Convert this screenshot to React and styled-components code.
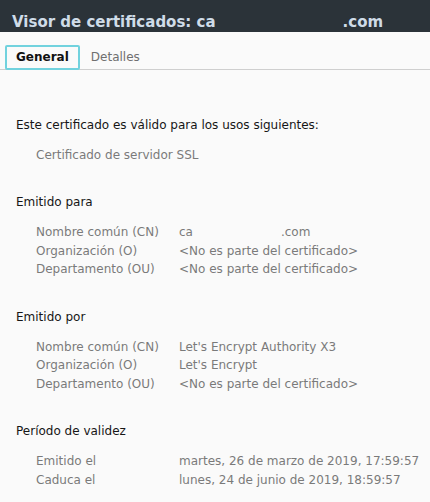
import styled, { createGlobalStyle } from 'styled-components'

const GlobalStyle = createGlobalStyle`
  html, body {
    margin: 0;
    padding: 0;
    background: #fafafa;
  }
  body {
    font-family: "DejaVu Sans", "Liberation Sans", sans-serif;
  }
`

const Blank = styled.span`
  display: inline-block;
  width: ${p => p.$w}px;
`

const sections = [
  {
    title: 'Emitido para',
    rows: [
      ['Nombre común (CN)', 'ca', '.com'],
      ['Organización (O)', '<No es parte del certificado>'],
      ['Departamento (OU)', '<No es parte del certificado>'],
    ],
  },
  {
    title: 'Emitido por',
    rows: [
      ['Nombre común (CN)', "Let's Encrypt Authority X3"],
      ['Organización (O)', "Let's Encrypt"],
      ['Departamento (OU)', '<No es parte del certificado>'],
    ],
  },
  {
    title: 'Período de validez',
    rows: [
      ['Emitido el', 'martes, 26 de marzo de 2019, 17:59:57'],
      ['Caduca el', 'lunes, 24 de junio de 2019, 18:59:57'],
    ],
  },
]

const App = () => {
  return <Window>
    <GlobalStyle />
    <TitleBar>
      Visor de certificados: ca<Blank $w={127} />.com
    </TitleBar>
    <Tabs>
      <Tab $active>General</Tab>
      <Tab>Detalles</Tab>
    </Tabs>
    <Content>
      <Heading>Este certificado es válido para los usos siguientes:</Heading>
      <Usage>Certificado de servidor SSL</Usage>
      {sections.map(s => (
        <Section key={s.title}>
          <Heading>{s.title}</Heading>
          <Fields>
            {s.rows.map(([label, value, tail]) => (
              <Row key={label}>
                <span>{label}</span>
                <span>{value}{tail && <><Blank $w={88} />{tail}</>}</span>
              </Row>
            ))}
          </Fields>
        </Section>
      ))}
    </Content>
  </Window>
}

const Window = styled.div`
  width: 430px;
  height: 502px;
  overflow: hidden;
  background: #fafafa;
`

const TitleBar = styled.div`
  height: 32px;
  box-sizing: border-box;
  padding: 0 0 2px 12px;
  background: #2b3339;
  color: #cfdce8;
  font-weight: bold;
  font-size: 15px;
  line-height: 1;
  display: flex;
  align-items: flex-end;
  overflow: hidden;
  white-space: pre;
  & > * {
    flex: none;
  }
`

const Tabs = styled.div`
  display: flex;
  align-items: flex-end;
  padding: 14px 0 0 5px;
  border-bottom: 1px solid #cfcfcf;
  height: 23px;
`

const Tab = styled.div`
  box-sizing: border-box;
  height: 25px;
  padding: 0 9px 1px;
  display: flex;
  align-items: center;
  font-size: 12px;
  margin-bottom: -1px;
  color: ${p => (p.$active ? '#111' : '#6f6f6f')};
  font-weight: ${p => (p.$active ? 'bold' : 'normal')};
  border: ${p => (p.$active ? '2px solid #71d2de' : '2px solid transparent')};
  border-radius: 2px;
`

const Content = styled.div`
  padding: 46px 0 0 16px;
  font-size: 12px;
  line-height: 18px;
`

const Heading = styled.div`
  color: #161616;
`

const Usage = styled.div`
  color: #7a7a7a;
  margin-top: 12px;
  padding-left: 20px;
`

const Section = styled.div`
  margin-top: 29px;
`

const Fields = styled.div`
  margin-top: 12.3px;
  margin-bottom: -0.3px;
  padding-left: 20px;
  display: flex;
  flex-direction: column;
`

const Row = styled.div`
  display: grid;
  grid-template-columns: 143px 1fr;
  line-height: 18.5px;
  color: #7a7a7a;
  white-space: pre;
`

export default App
